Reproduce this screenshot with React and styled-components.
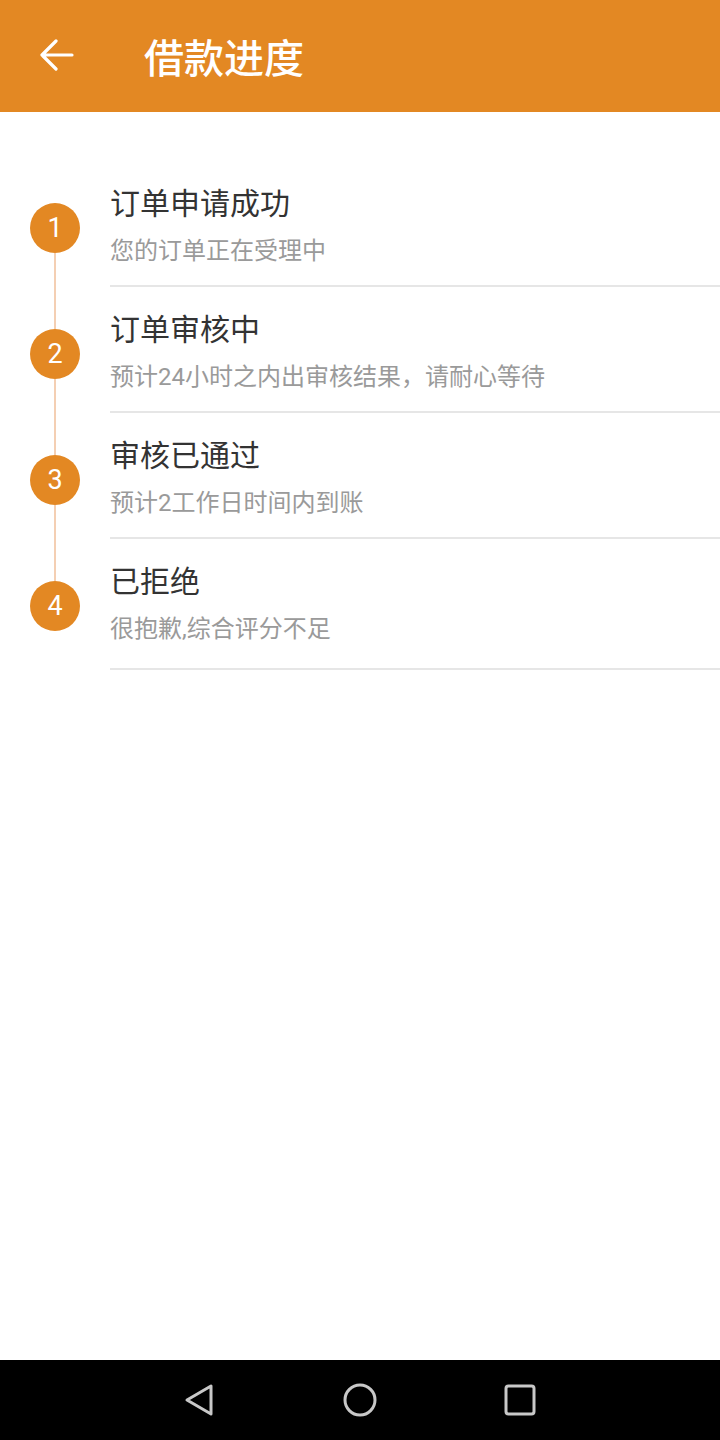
import React from "react";
import styled, { createGlobalStyle } from "styled-components";

const steps = [
  { title: "订单申请成功", desc: "您的订单正在受理中" },
  { title: "订单审核中", desc: "预计24小时之内出审核结果，请耐心等待" },
  { title: "审核已通过", desc: "预计2工作日时间内到账" },
  { title: "已拒绝", desc: "很抱歉,综合评分不足" },
];

const App = () => {
  return (
    <Page>
      <GlobalStyle />
      <Toolbar>
        <BackButton>
          <svg width="36" height="32" viewBox="0 0 36 32">
            <path
              d="M34 16 H4 M18 2 L4 16 L18 30"
              fill="none"
              stroke="#fff"
              strokeWidth="3.2"
              strokeLinecap="round"
              strokeLinejoin="round"
            />
          </svg>
        </BackButton>
        <Title>借款进度</Title>
      </Toolbar>

      <Main>
        <StepList>
          {steps.map((s, idx) => (
            <StepRow key={idx} $last={idx === steps.length - 1}>
              <Rail>
                <RailLine $off={idx === 0} />
                <Dot>{idx + 1}</Dot>
                <RailLine $grow $off={idx === steps.length - 1} />
              </Rail>
              <StepBody>
                <StepTitle>{s.title}</StepTitle>
                <StepDesc>{s.desc}</StepDesc>
              </StepBody>
            </StepRow>
          ))}
        </StepList>
      </Main>

      <NavBar>
        <NavIcon>
          <svg width="32" height="36" viewBox="0 0 32 36">
            <path
              d="M27 4 L27 32 L3 18 Z"
              fill="none"
              stroke="#c8c8c8"
              strokeWidth="3"
              strokeLinejoin="round"
            />
          </svg>
        </NavIcon>
        <NavIcon>
          <svg width="36" height="36" viewBox="0 0 36 36">
            <circle cx="18" cy="18" r="15" fill="none" stroke="#c8c8c8" strokeWidth="3" />
          </svg>
        </NavIcon>
        <NavIcon>
          <svg width="34" height="34" viewBox="0 0 34 34">
            <rect x="3" y="3" width="28" height="28" rx="2.5" fill="none" stroke="#c8c8c8" strokeWidth="3" />
          </svg>
        </NavIcon>
      </NavBar>
    </Page>
  );
};

const GlobalStyle = createGlobalStyle`
  html, body {
    margin: 0;
    padding: 0;
    background: #fff;
  }
  body {
    font-family: Roboto, "Noto Sans CJK SC", sans-serif;
  }
`;

const Page = styled.div`
  display: flex;
  flex-direction: column;
  min-height: 100vh;
  background: #fff;
`;

const Toolbar = styled.header`
  height: 112px;
  background: #e38823;
  display: flex;
  align-items: center;
  padding-left: 38px;
  box-sizing: border-box;
`;

const BackButton = styled.div`
  width: 36px;
  height: 32px;
  display: flex;
  align-items: center;
  margin-right: 70px;
  margin-top: -2px;
`;

const Title = styled.h1`
  margin: 0;
  color: #fff;
  font-size: 40px;
  font-weight: 500;
  font-family: Roboto, "Noto Sans CJK SC", sans-serif;
`;

const Main = styled.main`
  flex: 1;
  padding-top: 49px;
`;

const StepList = styled.div`
  display: flex;
  flex-direction: column;
`;

const StepRow = styled.div`
  display: flex;
  height: ${(p) => (p.$last ? "131px" : "126px")};
`;

const Rail = styled.div`
  width: 110px;
  flex-shrink: 0;
  display: flex;
  flex-direction: column;
  align-items: center;
`;

const RailLine = styled.div`
  width: 2px;
  height: 42px;
  flex: ${(p) => (p.$grow ? 1 : "none")};
  background: ${(p) => (p.$off ? "transparent" : "#f4cfb3")};
`;

const Dot = styled.div`
  width: 50px;
  height: 50px;
  border-radius: 50%;
  background: #e38823;
  color: #fff;
  font-size: 27px;
  font-family: Roboto, sans-serif;
  display: flex;
  align-items: center;
  justify-content: center;
  flex-shrink: 0;
`;

const StepBody = styled.div`
  flex: 1;
  box-sizing: border-box;
  padding-top: 24px;
  border-bottom: 2px solid #e6e6e6;
`;

const StepTitle = styled.div`
  font-size: 30px;
  line-height: 38px;
  color: #333;
`;

const StepDesc = styled.div`
  margin-top: 12px;
  font-size: 24px;
  line-height: 32px;
  color: #9a9a9a;
`;

const NavBar = styled.nav`
  height: 80px;
  background: #000;
  display: flex;
  align-items: center;
  justify-content: center;
  gap: 124px;
`;

const NavIcon = styled.div`
  width: 36px;
  height: 36px;
  display: flex;
  align-items: center;
  justify-content: center;
`;

export default App;
